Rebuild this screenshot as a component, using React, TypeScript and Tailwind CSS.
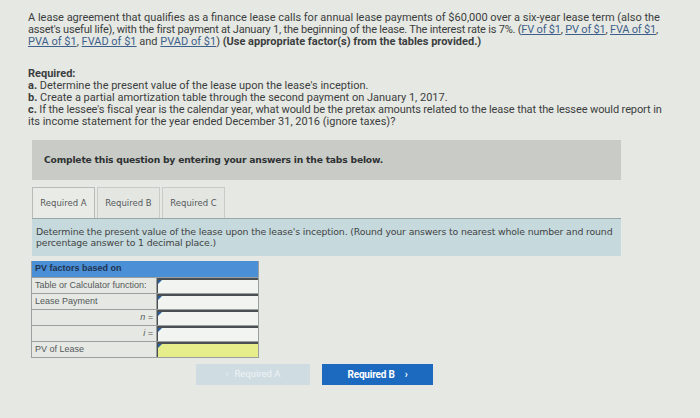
import React from "react"

const link = "text-[#3d5f8a] underline"

const Row = ({ label, right, yellow }: { label: string; right?: boolean; yellow?: boolean }) => (
  <div className="flex h-[16px] border-t border-[#9aa0a0]">
    <div className={`w-[125px] border-r border-[#9aa0a0] px-[3px] flex items-center text-[9px] text-[#55595b] ${right ? "justify-end italic" : ""}`}>
      {label}
    </div>
    <div className={`relative flex-1 border-t-2 border-l border-[#4a4f52] ${yellow ? "bg-[#e6ee8c]" : "bg-[#f1f4f0]"}`}>
      <span className="absolute left-0 top-0 w-0 h-0 border-t-[4px] border-r-[4px] border-t-[#2b5e9c] border-r-transparent" />
    </div>
  </div>
)

export default function App() {
  return (
    <div className="w-[700px] h-[418px] overflow-hidden bg-[#e6e8e3] text-[#3b3e40] pt-[12px]" style={{ fontFamily: "Roboto, 'Liberation Sans', sans-serif" }}>
      <div className="pl-[28px] pr-[20px] text-[11px] leading-[12px] tracking-[0px] whitespace-nowrap">
        <p>
          A lease agreement that qualifies as a finance lease calls for annual lease payments of $60,000 over a six-year lease term (also the
          <br />
          <span className="tracking-[-0.2px]">
            asset's useful life), with the first payment at January 1, the beginning of the lease. The interest rate is 7%. (<span className={link}>FV of $1</span>, <span className={link}>PV of $1</span>, <span className={link}>FVA of $1</span>,
          </span>
          <br />
          <span className={link}>PVA of $1</span>, <span className={link}>FVAD of $1</span> and <span className={link}>PVAD of $1</span>) <b className="font-bold">(Use appropriate factor(s) from the tables provided.)</b>
        </p>
        <p className="mt-[20px] font-bold">Required:</p>
        <p><b>a.</b> Determine the present value of the lease upon the lease's inception.</p>
        <p><b>b.</b> Create a partial amortization table through the second payment on January 1, 2017.</p>
        <p>
          <span className="tracking-[-0.1px]">
            <b>c.</b> If the lessee's fiscal year is the calendar year, what would be the pretax amounts related to the lease that the lessee would report in
          </span>
          <br />
          its income statement for the year ended December 31, 2016 (ignore taxes)?
        </p>
      </div>

      <div className="ml-[32px] w-[589px]" style={{ fontFamily: "'DejaVu Sans', Verdana, sans-serif" }}>
        <div className="mt-[12px] h-[40px] bg-[#c9ccc6] flex items-center pl-[12px] text-[9.2px] font-bold text-[#2f3234] tracking-[-0.2px]">
          Complete this question by entering your answers in the tabs below.
        </div>

        <div className="mt-[7px] flex gap-[2px] items-end">
          <div className="w-[63px] h-[31px] border border-b-0 border-[#b8bcb8] bg-[#e8ebe6] flex items-center justify-center text-[8.5px] text-[#55595b]">Required A</div>
          <div className="w-[63px] h-[31px] border border-b-0 border-[#c8ccc8] bg-[#e3e6e1] flex items-center justify-center text-[8.5px] text-[#55595b]">Required B</div>
          <div className="w-[63px] h-[31px] border border-b-0 border-[#c8ccc8] bg-[#e3e6e1] flex items-center justify-center text-[8.5px] text-[#55595b]">Required C</div>
        </div>

        <div className="h-[38px] bg-[#c6d9dc] border-t border-[#9aa6a8] pl-[4px] pt-[7px] text-[9.35px] leading-[11px] text-[#3f4345] tracking-[-0.15px] whitespace-nowrap">
          Determine the present value of the lease upon the lease's inception. (Round your answers to nearest whole number and round
          <br />
          percentage answer to 1 decimal place.)
        </div>
      </div>

      <div className="ml-[31px] mt-[5px] w-[228px] border-x border-b border-[#9aa0a0]" style={{ fontFamily: "'Liberation Sans', Arial, sans-serif" }}>
        <div className="h-[16px] bg-[#4b8fd6] flex items-center px-[3px] text-[9px] font-bold text-[#1f3450]">PV factors based on</div>
        <Row label="Table or Calculator function:" />
        <Row label="Lease Payment" />
        <Row label="n =" right />
        <Row label="i =" right />
        <Row label="PV of Lease" yellow />
      </div>

      <div className="mt-[6px] ml-[196px] flex gap-[12px]" style={{ fontFamily: "Roboto, 'Liberation Sans', sans-serif" }}>
        <div className="w-[114px] h-[21px] bg-[#cfdde3] flex items-center justify-center gap-[6px] text-[9.5px] text-[#eef3f5]">
          <span>&lsaquo;</span>
          <span>Required A</span>
        </div>
        <div className="w-[111px] h-[21px] bg-[#1b6ac0] flex items-center justify-center gap-[10px] text-[10px] font-bold text-white tracking-[-0.2px]">
          <span>Required B</span>
          <span>&rsaquo;</span>
        </div>
      </div>
    </div>
  )
}
